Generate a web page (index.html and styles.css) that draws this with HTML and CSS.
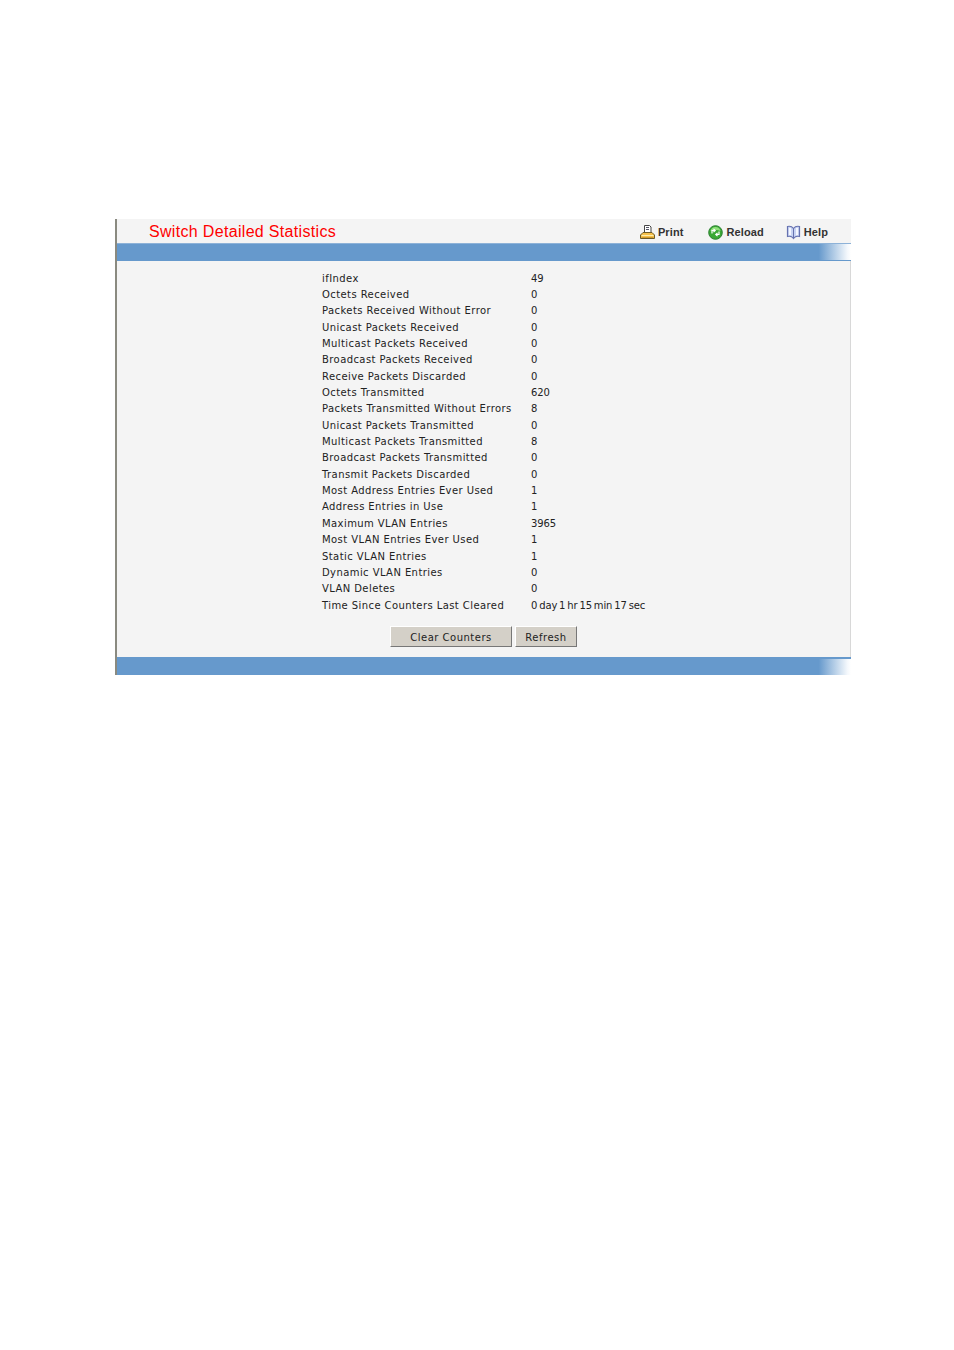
FILE: index.html
```html
<!DOCTYPE html>
<html lang="en">
<head>
    <meta charset="UTF-8">
    <title>Switch Detailed Statistics</title>
    <link rel="stylesheet" href="styles.css">
</head>
<body>
    <div class="panel">
        <div class="title-row">
            <h1>Switch Detailed Statistics</h1>
            <div class="links">
                <a class="link link-print">
                    <svg width="15" height="15" viewBox="0 0 15 15">
                        <path d="M4.500 .5h5l1.500 1.500V7.500h-6.500z" fill="#fff" stroke="#444" stroke-width="1"/>
                        <path d="M6 2.500h3M6 4.500h3" stroke="#556" stroke-width="1"/>
                        <path d="M3 7.500h9l2.500 2.500v3.500H.5V10z" fill="#f5c04a" stroke="#6b5a28" stroke-width="1"/>
                        <path d="M1.500 10.500h12" stroke="#fdeeb0" stroke-width="1"/>
                        <path d="M1.500 12.500h12" stroke="#d09a2c" stroke-width="1"/>
                    </svg>
                    Print
                </a>
                <a class="link link-reload">
                    <svg width="15" height="15" viewBox="0 0 15 15">
                        <circle cx="7.500" cy="7.500" r="6.800" fill="#3aa835" stroke="#2a8030" stroke-width="1"/>
                        <path d="M2.500 6C3 3.500 5 2 7.500 2S12 3.500 12.500 6C10 4.500 5 4.500 2.500 6z" fill="#8fe07a"/>
                        <path d="M4 8.500V5.500h2.500M5.500 3.800l1.700 1.700-1.700 1.700" fill="none" stroke="#fff" stroke-width="1.200"/>
                        <path d="M11 6.500v3H8.500M9.500 7.800L7.800 9.500l1.700 1.700" fill="none" stroke="#fff" stroke-width="1.200"/>
                    </svg>
                    Reload
                </a>
                <a class="link link-help">
                    <svg width="15" height="15" viewBox="0 0 15 15">
                        <path d="M7.500 3.500C6 1.500 3.500 1 1.500 1.500v10c2-.5 4.500 0 6 2 1.500-2 4-2.500 6-2v-10c-2-.5-4.500 0-6 2z" fill="#c9d4f2" stroke="#6672b0" stroke-width="1.200"/>
                        <path d="M7.500 3.500V13" stroke="#6672b0" stroke-width="1"/>
                        <path d="M4 3v7M11 3v7" stroke="#f4f6ff" stroke-width="2"/>
                    </svg>
                    Help
                </a>
            </div>
        </div>
        <div class="bar bar-top"></div>

        <div class="content">
            <table class="stats">
                <tr><td>ifIndex</td><td>49</td></tr>
                <tr><td>Octets Received</td><td>0</td></tr>
                <tr><td>Packets Received Without Error</td><td>0</td></tr>
                <tr><td>Unicast Packets Received</td><td>0</td></tr>
                <tr><td>Multicast Packets Received</td><td>0</td></tr>
                <tr><td>Broadcast Packets Received</td><td>0</td></tr>
                <tr><td>Receive Packets Discarded</td><td>0</td></tr>
                <tr><td>Octets Transmitted</td><td>620</td></tr>
                <tr><td>Packets Transmitted Without Errors</td><td>8</td></tr>
                <tr><td>Unicast Packets Transmitted</td><td>0</td></tr>
                <tr><td>Multicast Packets Transmitted</td><td>8</td></tr>
                <tr><td>Broadcast Packets Transmitted</td><td>0</td></tr>
                <tr><td>Transmit Packets Discarded</td><td>0</td></tr>
                <tr><td>Most Address Entries Ever Used</td><td>1</td></tr>
                <tr><td>Address Entries in Use</td><td>1</td></tr>
                <tr><td>Maximum VLAN Entries</td><td>3965</td></tr>
                <tr><td>Most VLAN Entries Ever Used</td><td>1</td></tr>
                <tr><td>Static VLAN Entries</td><td>1</td></tr>
                <tr><td>Dynamic VLAN Entries</td><td>0</td></tr>
                <tr><td>VLAN Deletes</td><td>0</td></tr>
                <tr><td>Time Since Counters Last Cleared</td><td>0 day 1 hr 15 min 17 sec</td></tr>
            </table>

            <div class="buttons">
                <button class="btn btn-clear">Clear Counters</button>
                <button class="btn btn-refresh">Refresh</button>
            </div>
        </div>
        <div class="bar bar-bottom"></div>
    </div>
</body>
</html>
```
FILE: styles.css
```css
body {
    margin: 219px 103px 0 115px;
    background-color: #ffffff;
    font-family: "DejaVu Sans", sans-serif;
    color: #222222;
}

.panel {
    background-color: #f4f4f4;
    border-left: 2px solid #8a8a80;
    height: 456px;
    display: flex;
    flex-direction: column;
}

.title-row {
    height: 24px;
    padding-top: 2px;
    box-sizing: border-box;
    display: flex;
    align-items: center;
    justify-content: space-between;
}

h1 {
    margin: 0 0 0 32px;
    font-family: "Liberation Sans", sans-serif;
    font-size: 16px;
    font-weight: normal;
    letter-spacing: 0.32px;
    color: #ff0000;
}

.links {
    display: flex;
    margin-right: 23px;
    font-family: "Liberation Sans", sans-serif;
    font-size: 11px;
    font-weight: bold;
    letter-spacing: 0.1px;
    color: #333333;
}

.link {
    display: flex;
    align-items: center;
    gap: 3px;
}

.link-print {
    margin-right: 25px;
}

.link-reload {
    margin-right: 22px;
}

.bar {
    height: 18px;
    flex-shrink: 0;
    box-sizing: border-box;
    background-color: #6699cc;
    background-image: linear-gradient(to right, #6699cc 95.600%, #f4f8fc 99.500%, #ffffff 100%);
}

.bar-top {
    border-top: 1px solid #8db2d8;
    border-bottom: 1px solid #6699cc;
}

.bar-bottom {
    border-top: 2px solid #6699cc;
}

.content {
    flex: 1;
    border-right: 1px solid #d8d8d8;
}

.stats {
    border-collapse: collapse;
    margin: 9px 0 0 205px;
    font-size: 10px;
    letter-spacing: 0.42px;
}

.stats td {
    height: 16.350px;
    padding: 0;
    white-space: nowrap;
}

.stats td:first-child {
    width: 209px;
}

.stats td:last-child {
    letter-spacing: -0.1px;
    word-spacing: -1.200px;
}

.buttons {
    display: flex;
    gap: 3px;
    margin: 13px 0 0 273px;
}

.btn {
    height: 21px;
    padding: 1px 0 0;
    background-color: #d4d0c8;
    border: 1px solid;
    border-color: #ffffff #777777 #777777 #ffffff;
    font-family: "DejaVu Sans", sans-serif;
    font-size: 10px;
    letter-spacing: 0.5px;
    color: #222222;
}

.btn-clear {
    width: 122px;
}

.btn-refresh {
    width: 62px;
}
```
